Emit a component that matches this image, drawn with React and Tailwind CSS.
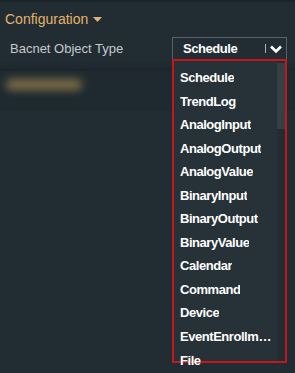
import React from 'react';

const items = [
  'Schedule',
  'TrendLog',
  'AnalogInput',
  'AnalogOutput',
  'AnalogValue',
  'BinaryInput',
  'BinaryOutput',
  'BinaryValue',
  'Calendar',
  'Command',
  'Device',
  'EventEnrollment',
  'File',
];

export default function App() {
  return (
    <div
      className="w-[295px] h-[373px] overflow-hidden bg-[#222d33] relative"
      style={{ fontFamily: '"Liberation Sans", Arial, sans-serif' }}
    >
      <div className="h-[2px] bg-[#1b2429]" />
      <div className="flex items-center gap-[5px] pl-[5px] pt-[7px] h-[27px]">
        <span className="text-[14px] text-[#e2b36a]">Configuration</span>
        <svg width="9" height="5" viewBox="0 0 9 5" className="mt-[1px]">
          <path d="M0 0 L9 0 L4.5 5 Z" fill="#e2b36a" />
        </svg>
      </div>
      <div className="flex items-center h-[32px] pr-[8px] pt-[7px]">
        <span className="pl-[10px] text-[13px] text-[#c5cace] flex-1">Bacnet Object Type</span>
        <div className="w-[115px] h-[24px] border border-[#56616b] flex items-center pl-[10px] pr-[3px]">
          <span className="flex-1 text-[13px] font-bold tracking-[-0.45px] text-white">Schedule</span>
          <span className="w-[1px] h-[9px] bg-[#aab0b5] mr-[3px]" />
          <svg width="14" height="10" viewBox="0 0 14 10">
            <path d="M2 2.5 L7 7.5 L12 2.5" stroke="#ffffff" strokeWidth="2.6" fill="none" />
          </svg>
        </div>
      </div>
      <div className="h-[10px] bg-gradient-to-b from-[#222d33] to-[#1b252b]" />
      <div className="h-[40px] bg-[#1f2a30] flex items-start pt-[8px] pl-[6px]">
        <div className="w-[76px] h-[11px] rounded-full bg-[#7d6d47] blur-[4px]" />
      </div>

      <div className="absolute left-[172px] top-[59px] w-[115px] h-[304px] border-2 border-[#c4161c] bg-[#263238] flex">
        <div className="flex-1 min-w-0 pl-[6px] pt-[5px] pr-[2px] flex flex-col">
          {items.map((it) => (
            <div key={it} className="h-[23.55px] shrink-0 flex items-center text-[13px] font-bold tracking-[-0.45px] text-white min-w-0">
              <span className="truncate">{it}</span>
            </div>
          ))}
        </div>
        <div className="w-[8px] bg-[#222c32] pt-[2px]">
          <div className="h-[66px] bg-[#343f46]" />
        </div>
      </div>
    </div>
  );
}
